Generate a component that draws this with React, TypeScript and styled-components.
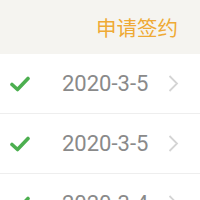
import React from "react";
import styled, { createGlobalStyle } from "styled-components";

const Global = createGlobalStyle`
  html, body { margin: 0; padding: 0; background: #ffffff; }
  body { font-family: Roboto, "Noto Sans CJK SC", sans-serif; }
`;

const Page = styled.div`
  width: 200px;
  height: 200px;
  overflow: hidden;
  background: #ffffff;
`;

const Header = styled.div`
  height: 54px;
  background: #f5f4f0;
  display: flex;
  align-items: center;
  justify-content: flex-end;
  padding-right: 22px;
`;

const Apply = styled.span`
  font-family: "Noto Sans CJK SC", sans-serif;
  font-size: 20.5px;
  color: #efaa35;
  line-height: 1;
`;

const Row = styled.div`
  height: 59px;
  border-bottom: 1px solid #eeeeee;
  display: flex;
  align-items: center;
`;

const CheckCell = styled.div`
  width: 62px;
  padding-left: 10px;
  box-sizing: border-box;
  display: flex;
  align-items: center;
`;

const DateText = styled.span`
  flex: 1;
  font-family: Roboto, sans-serif;
  font-size: 22px;
  color: #8a8a8a;
`;

const Chevron = styled.div`
  width: 32px;
  display: flex;
  align-items: center;
`;

const Check = () => (
  <svg width="20" height="16" viewBox="0 0 20 16">
    <path d="M2 8.5 L7.5 13.5 L18 2.5" fill="none" stroke="#4caf50" strokeWidth="3.6" strokeLinecap="round" strokeLinejoin="round" />
  </svg>
);

const Arrow = () => (
  <svg width="11" height="17" viewBox="0 0 11 17">
    <path d="M1.5 1 L9 8.5 L1.5 16" fill="none" stroke="#d4d4d4" strokeWidth="1.8" />
  </svg>
);

const dates = ["2020-3-5", "2020-3-5", "2020-3-4"];

export default function App() {
  return (
    <Page>
      <Global />
      <Header>
        <Apply>申请签约</Apply>
      </Header>
      {dates.map((d, i) => (
        <Row key={i}>
          <CheckCell>
            <Check />
          </CheckCell>
          <DateText>{d}</DateText>
          <Chevron>
            <Arrow />
          </Chevron>
        </Row>
      ))}
    </Page>
  );
}
